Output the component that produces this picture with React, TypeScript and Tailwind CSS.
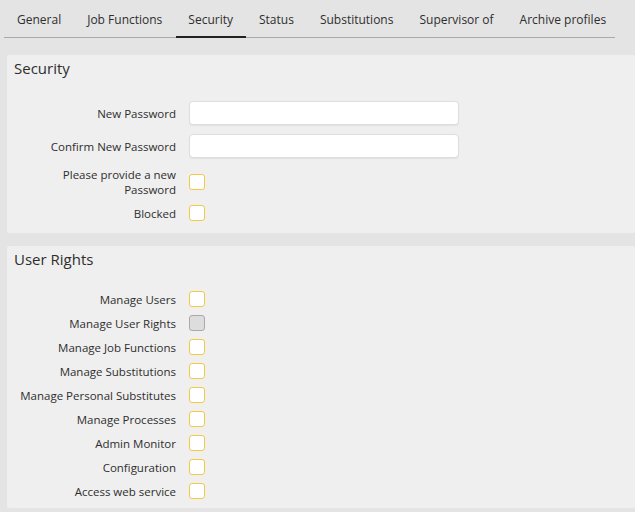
const tabs = ["General", "Job Functions", "Security", "Status", "Substitutions", "Supervisor of", "Archive profiles"];

const rights: { label: string; disabled?: boolean }[] = [
  { label: "Manage Users" },
  { label: "Manage User Rights", disabled: true },
  { label: "Manage Job Functions" },
  { label: "Manage Substitutions" },
  { label: "Manage Personal Substitutes" },
  { label: "Manage Processes" },
  { label: "Admin Monitor" },
  { label: "Configuration" },
  { label: "Access web service" },
];

function Check({ disabled }: { disabled?: boolean }) {
  return (
    <span
      className={
        disabled
          ? "block shrink-0 w-[16px] h-[16px] rounded-[3px] border border-[#aaaaaa] bg-[#dddddd]"
          : "block shrink-0 w-[16px] h-[16px] rounded-[3px] border border-[#f5c842] bg-white"
      }
    />
  );
}

function Row({ label, children }: { label: string; children: React.ReactNode }) {
  return (
    <div className="flex items-center gap-[13px] min-h-[24px]">
      <div className="w-[160px] shrink-0 text-right leading-[15px]">{label}</div>
      {children}
    </div>
  );
}

export default function App() {
  return (
    <div
      className="w-[635px] h-[512px] bg-[#e4e4e4] text-[#2e2e2e] text-[11.5px] overflow-hidden"
      style={{ fontFamily: '"Open Sans", sans-serif' }}
    >
      {/* Tabs */}
      <div className="flex ml-[4px] w-[611px] border-b border-[#aaaaaa] text-[12px]">
        {tabs.map((t) => (
          <div
            key={t}
            className="relative shrink-0 whitespace-nowrap px-[13px] pt-[10px] pb-[7px] leading-[20px]"
          >
            {t}
            {t === "Security" && (
              <span className="absolute left-[1px] right-0 -bottom-[1px] h-[2px] bg-[#222222]" />
            )}
          </div>
        ))}
      </div>

      {/* Security panel */}
      <div className="ml-[7px] mt-[17px] bg-[#efefef] rounded-[2px] pt-[3px] pb-[8px] pl-[9px]">
        <div className="text-[15px] leading-[20px] -ml-[2px]">Security</div>
        <div className="mt-[23px] flex flex-col">
          <Row label="New Password">
            <div className="w-[270px] h-[24px] bg-white rounded-[4px] border border-[#dedede] shadow-[0_1px_1px_rgba(0,0,0,0.06)]" />
          </Row>
          <div className="h-[9px]" />
          <Row label="Confirm New Password">
            <div className="w-[270px] h-[24px] bg-white rounded-[4px] border border-[#dedede] shadow-[0_1px_1px_rgba(0,0,0,0.06)]" />
          </Row>
          <div className="h-[9px]" />
          <Row label="Please provide a new Password">
            <Check />
          </Row>
          <div className="h-[4px]" />
          <Row label="Blocked">
            <Check />
          </Row>
        </div>
      </div>

      {/* User Rights panel */}
      <div className="ml-[7px] mt-[13px] bg-[#efefef] rounded-[2px] pt-[3px] pb-[5px] pl-[9px]">
        <div className="text-[15px] leading-[20px] -ml-[2px]">User Rights</div>
        <div className="mt-[18px] flex flex-col">
          {rights.map((r) => (
            <Row key={r.label} label={r.label}>
              <Check disabled={r.disabled} />
            </Row>
          ))}
        </div>
      </div>
    </div>
  );
}
